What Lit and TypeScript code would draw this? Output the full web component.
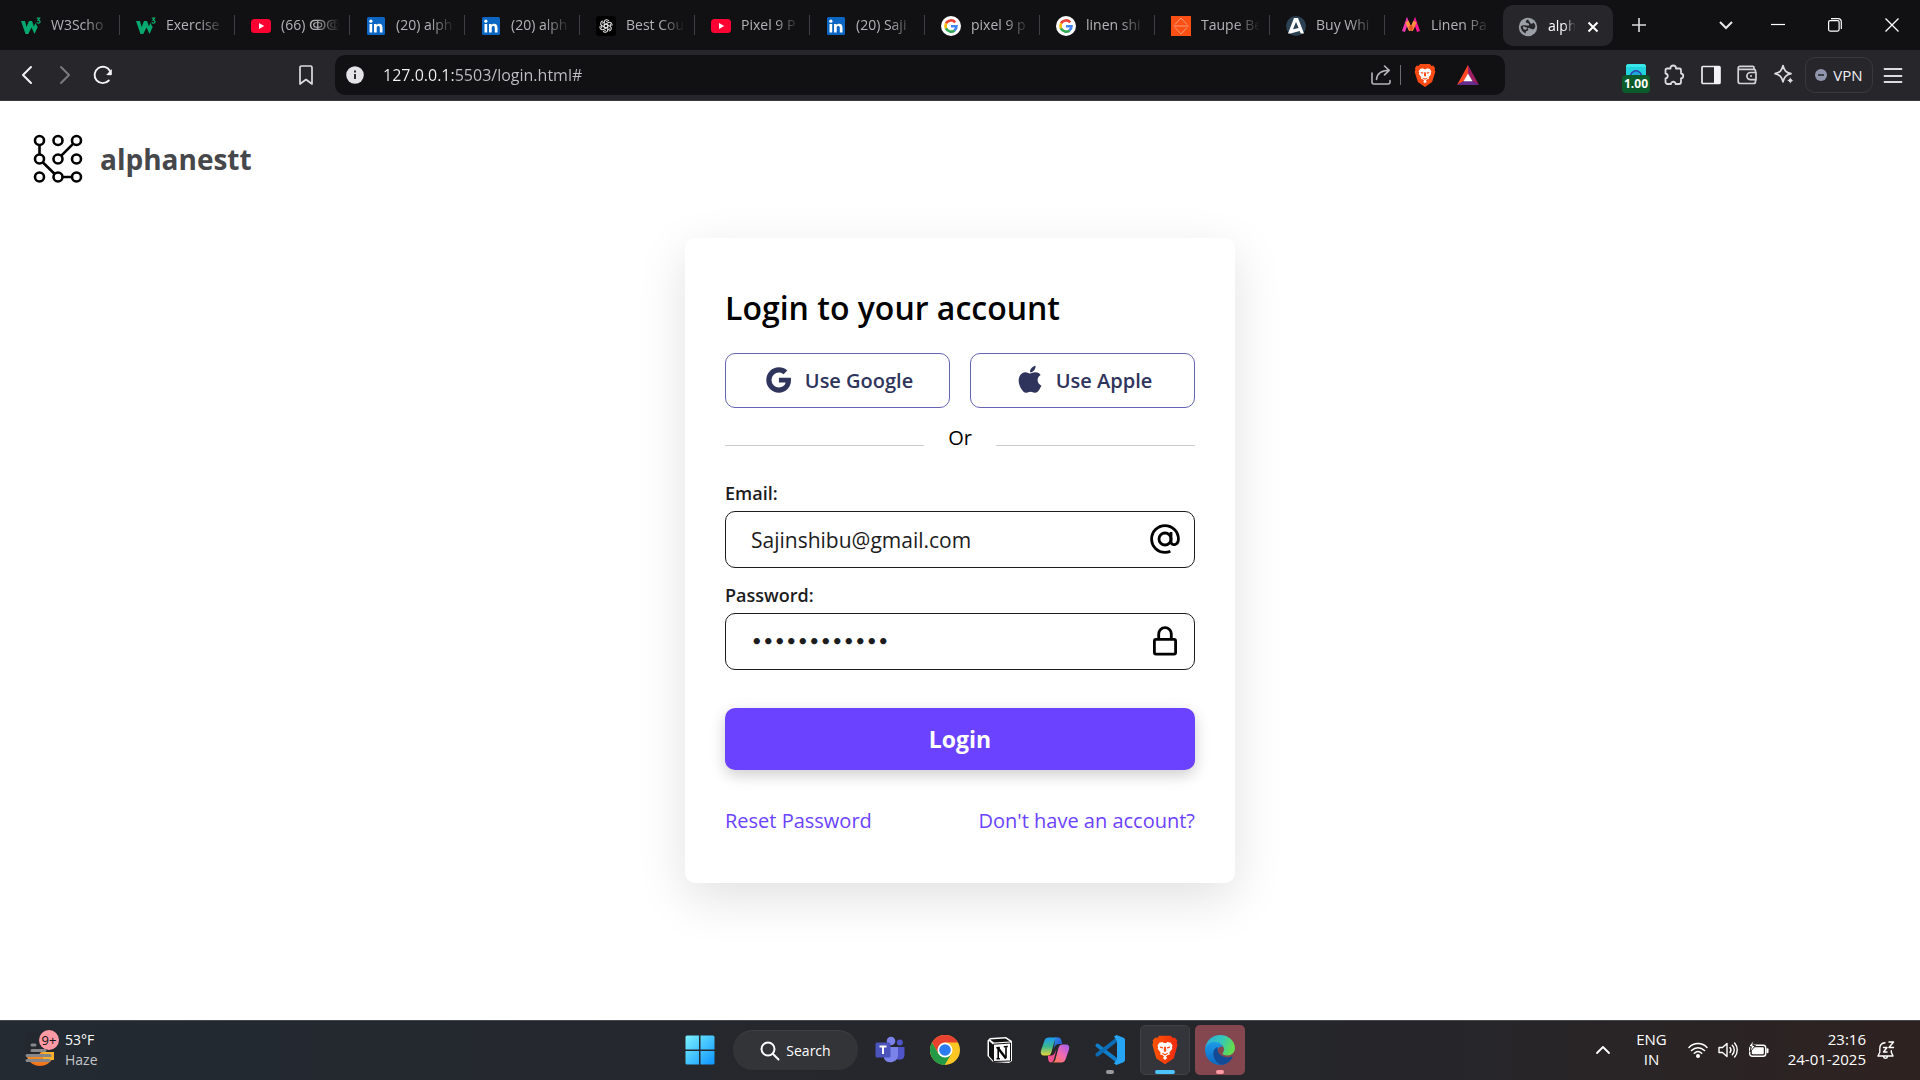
import { LitElement, html, svg, css } from "lit";
import { customElement, state } from "lit/decorators.js";

const pic = (w: number, h: number, box: string, body: unknown) =>
  html`<svg class="ic" width=${w} height=${h} viewBox=${box} fill="none" aria-hidden="true">${body}</svg>`;

const lion = svg`
  <path fill="#fff" d="M5.600 5.500 8 4.900l1.200.800h1.600L12 4.900l2.400.600 1.400 2-.500 1.500.300 1-2.300 3.200.500 1.200-1.800.500-1.300 1.300 1 .9L10 18.600l-1.700-1.500 1-.9L8 14.900l-1.800-.5.500-1.200L4.400 10l.3-1-.5-1.500z"/>
  <path fill="#fb4b14" d="M5.800 8.200l2.700.6-.2 1-1.800-.3zM14.200 8.200l-2.700.6.2 1 1.800-.3zM9.300 8.500h1.400l.3 3.200-1 .8-1-.8zM7.600 13.200l2.400.9 2.400-.9-.4.900-2 1.200-2-1.200z"/>`;

const icons = {
  w3: pic(20, 20, "0 0 20 20", svg`<path fill="#04aa6d" d="M0 5h4l1.600 6L8 5h3l2 5.500L14.300 7l2.400 4-3.200 7-3-6.500L7.200 18H4.500z"/><path stroke="#04aa6d" stroke-width="1.300" d="M15.800 2.200h2.700l-1.500 2c2.600-.2 2.600 3 .6 3-.9 0-1.500-.3-1.900-1"/>`),
  youtube: pic(20, 20, "0 0 20 20", svg`<rect y="3" width="20" height="14" rx="3.500" fill="#ff0033"/><path fill="#fff" d="M8 7v6l5.200-3z"/>`),
  linkedin: pic(20, 20, "0 0 20 20", svg`<rect x="1" y="1" width="18" height="18" rx="1.500" fill="#0a66c2"/><path fill="#fff" d="M3.500 8h2.700v8.500H3.500zM8 8h2.600v1.200c1.300-2.200 5.900-2.100 5.900 2.200v5.100h-2.700v-4.700c0-2.300-3.100-2.200-3.100 0v4.700H8z"/><circle cx="4.850" cy="5.200" r="1.600" fill="#fff"/>`),
  openai: pic(20, 20, "0 0 20 20", svg`<rect width="20" height="20" rx="3" fill="#000"/><g transform="translate(1.500 1.500) scale(.85)" stroke="#e0e0e0" stroke-width="1.200">${[0, 60, 120, 180, 240, 300].map(a => svg`<path transform="rotate(${a} 10 10)" d="M10 12.400 7.900 11.200V5.600c0-3.200 4.200-3.900 5.500-1.400M10.200 4.200l3.600 2.100"/>`)}</g>`),
  google: pic(20, 20, "0 0 20 20", svg`<circle cx="10" cy="10" r="10" fill="#fff"/><g stroke-width="2.600"><path stroke="#ea4335" d="M14.200 6.300A5.600 5.600 0 0 0 5 7.500"/><path stroke="#fbbc05" d="M5.100 7.400a5.600 5.600 0 0 0 0 5.200"/><path stroke="#34a853" d="M5 12.400a5.600 5.600 0 0 0 8.600 2"/><path stroke="#4285f4" d="M13.400 14.500a5.600 5.600 0 0 0 2.100-4.300H10"/></g>`),
  taupe: pic(20, 20, "0 0 20 20", svg`<path fill="#fb4f14" d="M0 0h20v20H0z"/><path stroke="#ff9d7c" d="M4 8.500 10 2l6 6.500M4 11.500l6 6.500 6-6.500M2.500 10h15"/>`),
  ajio: pic(20, 20, "0 0 20 20", svg`<circle cx="10" cy="10" r="10" fill="#2c4152"/><path fill="#fff" fill-rule="evenodd" d="M8 2h4l6 15.500h-3.200L13.600 15l-9 2.500H2zm2 4L7 13.300l5.600-1.200z"/>`),
  myntra: pic(20, 20, "0 0 20 20", svg`<path stroke="#f13ab1" stroke-width="3.200" d="M2.500 15.500 6 5.500l3 8"/><path stroke="#ff1493" stroke-width="3.200" d="m11 13.500 3-8 3.500 10"/><path stroke="#fd913c" stroke-width="3.600" d="m6 5.500 3.800 9M14 5.500l-4 9"/><path stroke="#f05524" stroke-width="2.600" d="m9 10 1 4 1-4"/>`),
  globe: pic(20, 20, "0 0 20 20", svg`<circle cx="10" cy="10" r="9.200" fill="#9aa0a6"/><path fill="#27272b" d="M10.500 2.500c-2.600.5-3.200 1.900-2.300 2.900.8.900 3 .5 3 2 0 1.700-2.800 1.100-4.200.9C5.600 8 3.700 8.500 2.600 9.500c.2 3.400 2 5.700 5 7 0-1.800.4-2.400 2-2.800 1.200-.3 1-1.700-.2-2.500 3.200-.6 4 1.800 6 1.100 1.100-.4 1.500-1.500 2-2.800-.2-1.400-.9-2.800-1.800-3.900-.6 1.100-1.900 1.500-2.900.9-.9-.6-.6-1.700-1.500-2.300-.6-.4-1-.8-.7-1.700z"/><path fill="#9aa0a6" d="m5 9.300 4.200 1.500-1.200 2-2.600-.6z"/>`),
  close: pic(12, 12, "0 0 12 12", svg`<path stroke="#fff" stroke-width="2" d="m1.500 1.500 9 9m0-9-9 9"/>`),
  plus: pic(14, 14, "0 0 14 14", svg`<path stroke="#dcdcde" stroke-width="1.600" d="M7 0v14M0 7h14"/>`),
  down: pic(14, 14, "0 0 14 14", svg`<path stroke="#e8e8ea" stroke-width="2" d="m1 4 6 6 6-6"/>`),
  min: pic(14, 14, "0 0 14 14", svg`<path stroke="#fff" stroke-width="1.200" d="M0 6.500h14"/>`),
  restore: pic(14, 14, "0 0 14 14", svg`<rect x=".600" y="2.600" width="10.500" height="10.500" rx="1.500" stroke="#fff" stroke-width="1.200"/><path stroke="#fff" stroke-width="1.200" d="M3 .6h7a3.300 3.300 0 0 1 3.300 3.300v7"/>`),
  quit: pic(14, 14, "0 0 14 14", svg`<path stroke="#fff" stroke-width="1.300" d="m.5.5 13 13m0-13-13 13"/>`),
  back: pic(20, 20, "0 0 20 20", svg`<path stroke="#f4f4f6" stroke-width="2" stroke-linecap="round" stroke-linejoin="round" d="m14 2-8 8 8 8"/>`),
  forward: pic(20, 20, "0 0 20 20", svg`<path stroke="#7c7c82" stroke-width="1.800" stroke-linecap="round" stroke-linejoin="round" d="m6 2 8 8-8 8"/>`),
  reload: pic(20, 20, "0 0 20 20", svg`<path stroke="#f4f4f6" stroke-width="1.900" stroke-linecap="round" d="M15.800 15.500A8.200 8.200 0 1 1 17 6"/><path fill="#f4f4f6" d="M18.800 4v5.500a1 1 0 0 1-1 .8l-4.600-.4z"/>`),
  bookmark: pic(20, 20, "0 0 20 20", svg`<path stroke="#dcdce0" stroke-width="1.700" stroke-linejoin="round" d="M4 2.500A1.500 1.500 0 0 1 5.500 1h9A1.500 1.500 0 0 1 16 2.500V19l-6-4.500L4 19z"/>`),
  info: pic(18, 18, "0 0 18 18", svg`<circle cx="9" cy="9" r="8.800" fill="#e3e3e8"/><path stroke="#1a1a1e" stroke-width="1.800" d="M9 8v5M9 4.600v1.800"/>`),
  share: pic(20, 20, "0 0 20 20", svg`<g stroke="#b4b4ba" stroke-width="1.600" stroke-linecap="round" stroke-linejoin="round"><path d="M1 8v9a2 2 0 0 0 2 2h14a2 2 0 0 0 2-2v-1.500"/><path d="M5.500 14.500C6 8 10 5.500 18 5.300M13.500 1l4.700 4.300-4.700 4.500"/></g>`),
  brave: pic(22, 24, "0 0 20 22", svg`<path fill="#fb4b14" d="M14.500 1 16 2.700l1.500-.3 1.800 2.300-.5 1.500.7 1.800-3 9.500L10 22l-6.500-4.500L.5 8l.7-1.800-.5-1.500 1.800-2.300 1.500.3L5.500 1z"/>${lion}`),
  bat: pic(22, 20, "0 0 22 20", svg`<path fill="#ff4724" d="M11 0 0 20l7-4 4-7z"/><path fill="#9e1f63" d="m11 0 11 20-7-4-4-7z"/><path fill="#662d91" d="M0 20h22l-7-4H7z"/><path fill="#fff" d="m11 8.500 4.500 7.700h-9z"/>`),
  puzzle: pic(22, 22, "0 0 22 22", svg`<path stroke="#dcdce0" stroke-width="1.800" stroke-linejoin="round" d="M2.500 6A1.500 1.500 0 0 1 4 4.500h3.500c-.500-4 6-4 5.500 0h3.500A1.500 1.500 0 0 1 18 6v3.500c3 .5 3 4.500 0 5V18a2 2 0 0 1-2 2h-3.500c.3-3-4.600-3-4.500 0H4.500a2 2 0 0 1-2-2v-3.500c3-.3 3-4.500 0-5z"/>`),
  panel: pic(20, 20, "0 0 20 20", svg`<rect x="1" y="1.500" width="18" height="17" rx="1" stroke="#ececf0" stroke-width="1.700"/><path fill="#f4f4f8" d="M13 1h6v18h-6z"/>`),
  wallet: pic(20, 20, "0 0 20 20", svg`<g stroke="#d4d4d8" stroke-width="1.700" stroke-linejoin="round"><path d="M18.500 7V5.800a1.500 1.500 0 0 0-1.500-1.500H1.500M17 4V2.500A1.200 1.200 0 0 0 15.800 1.300H3a1.700 1.700 0 0 0-1.800 1.700v13.500A2 2 0 0 0 3 18.500h13.500a2 2 0 0 0 2-2V15"/><path d="M19 7.500h-5.500a3.600 3.600 0 0 0 0 7.200H19z"/></g><circle cx="14" cy="11" r="1" fill="#d4d4d8"/>`),
  leo: pic(22, 22, "0 0 22 22", svg`<path stroke="#dcdce0" stroke-width="1.700" stroke-linejoin="round" d="M10 1.500c1.200 5.200 3 7 8 8.200-5 1.200-6.800 3-8 8.200-1.200-5.200-3-7-8-8.200 5-1.200 6.800-3 8-8.200z"/><path fill="#dcdce0" stroke="#27272b" d="M17.300 12c.5 2.800 1.600 3.900 4.400 4.400-2.800.6-3.900 1.700-4.400 4.500-.6-2.800-1.700-3.900-4.500-4.500 2.800-.5 3.900-1.600 4.500-4.400z"/>`),
  ext: pic(22, 22, "0 0 22 22", svg`<rect x="1" y="0" width="20" height="18" rx="3" fill="#22d3dd"/><path fill="#38e8e8" d="M4 0h14a3 3 0 0 1 3 3H1a3 3 0 0 1 3-3z"/><path stroke="#2b3fae" stroke-width="1.600" d="M5.500 11c3-5.500 8-5.500 11 0"/><circle cx="11" cy="10.500" r="3" fill="#1fa5d8"/>`),
  vpn: pic(12, 12, "0 0 12 12", svg`<circle cx="6" cy="6" r="6" fill="#9296ad"/><path stroke="#2a2b33" stroke-width="1.600" d="M3 6h6"/>`),
  menu: pic(20, 20, "0 0 20 20", svg`<path stroke="#dcdce0" stroke-width="1.800" stroke-linecap="round" d="M1.500 4h17M1.500 11h17M1.500 17h17"/>`),
  logo: pic(50, 50, "0 0 50 50", svg`<g stroke="#000" stroke-width="2.600">${[6.5, 25, 43].map(y => [6.5, 25, 43.5].map(x => svg`<circle cx=${x} cy=${y} r="4.500"/>`))}<path d="M6.500 11v9.500M40.300 9.700 28.300 21.700M9.700 28.300l12 11.700M29.500 43h9.500"/></g>`),
  gmark: pic(34, 34, "0 0 24 24", svg`<path fill="currentColor" d="M20.283 10.356h-8.327v3.451h4.792c-.446 2.193-2.313 3.453-4.792 3.453a5.270 5.270 0 0 1-5.279-5.280 5.270 5.270 0 0 1 5.279-5.279c1.259 0 2.397.447 3.290 1.178l2.600-2.599c-1.584-1.381-3.615-2.233-5.890-2.233a8.908 8.908 0 0 0-8.934 8.934 8.907 8.907 0 0 0 8.934 8.934c4.467 0 8.529-3.249 8.529-8.934 0-.528-.081-1.097-.202-1.625z"/>`),
  amark: pic(34, 34, "0 0 24 24", svg`<path fill="currentColor" d="M19.665 16.811a10.316 10.316 0 0 1-1.021 1.837c-.537.767-.978 1.297-1.316 1.592-.525.482-1.089.730-1.692.744-.432 0-.954-.123-1.562-.373-.610-.249-1.170-.371-1.683-.371-.537 0-1.113.122-1.730.371-.616.250-1.114.381-1.495.393-.577.025-1.154-.229-1.729-.764-.367-.320-.826-.870-1.377-1.648-.590-.829-1.075-1.794-1.455-2.891-.407-1.187-.611-2.335-.611-3.447 0-1.273.275-2.372.826-3.292a4.857 4.857 0 0 1 1.730-1.751 4.650 4.650 0 0 1 2.340-.662c.460 0 1.063.142 1.810.422s1.227.422 1.436.422c.158 0 .689-.167 1.593-.498.853-.307 1.573-.434 2.163-.384 1.600.129 2.801.759 3.600 1.895-1.430.867-2.137 2.080-2.123 3.637.012 1.213.453 2.222 1.317 3.023a4.330 4.330 0 0 0 1.315.863c-.106.307-.218.600-.336.882zM15.998 2.380c0 .950-.348 1.838-1.039 2.659-.836.976-1.846 1.541-2.941 1.452a2.955 2.955 0 0 1-.021-.360c0-.913.396-1.889 1.103-2.688.352-.404.800-.741 1.343-1.009.542-.264 1.054-.410 1.536-.435.013.128.019.255.019.381z"/>`),
  at: pic(32, 32, "0 0 32 32", svg`<g stroke="#000" stroke-width="2.800"><circle cx="16" cy="16" r="6"/><path d="M22 9v9.500c0 5 7.400 4 7.400-2.500A13.400 13.400 0 1 0 16 29.400c2 0 3.800-.4 5.400-1.100"/></g>`),
  lock: pic(32, 32, "0 0 32 32", svg`<g stroke="#000" stroke-width="2.800"><rect x="5.400" y="14.400" width="21.200" height="14.700" rx="1.500"/><path d="M9.700 14V9a6.300 6.300 0 0 1 12.600 0v5"/></g>`),
  weather: pic(34, 36, "0 0 34 36", svg`<defs><linearGradient id="sun" x2="0" y2="1"><stop stop-color="#ffc12e"/><stop offset="1" stop-color="#f0701c"/></linearGradient></defs><circle cx="15" cy="20" r="14" fill="url(#sun)"/><path fill="#23282f" d="M0 0h34v20H16l-4 5H0z"/><path fill="#fbb02c" d="M18 20h11v8H18z"/><path stroke="#85878b" stroke-width="3" stroke-linecap="round" d="M7 13h3M7 18.500h13M2 23.500h18M21 23.500h4M2 28.500h22"/>`),
  windows: pic(30, 30, "0 0 30 30", svg`<defs><linearGradient id="win" x1="0" y1="0" x2="30" y2="30" gradientUnits="userSpaceOnUse"><stop stop-color="#7df3ff"/><stop offset="1" stop-color="#0a93ff"/></linearGradient></defs><path fill="url(#win)" d="M2 .5h12v14H.5V2A1.500 1.500 0 0 1 2 .500zM15.500.500H28A1.500 1.500 0 0 1 29.500 2v12.500h-14zM.5 16h13.500v13.500H2A1.500 1.500 0 0 1 .5 28zM15.500 16h14v12a1.500 1.500 0 0 1-1.500 1.500H15.500z"/>`),
  search: pic(20, 20, "0 0 20 20", svg`<circle cx="8" cy="8" r="6.500" stroke="#fff" stroke-width="2"/><path stroke="#fff" stroke-width="2" stroke-linecap="round" d="m12.800 12.800 5.700 5.700"/>`),
  teams: pic(30, 30, "0 0 30 30", svg`<circle cx="24.800" cy="7.500" r="3" fill="#4f54c8"/><path fill="#4f54c8" d="M20 12h9.500v7.500c0 5-4 6-8 4.500z"/><circle cx="16" cy="6" r="4.300" fill="#7b83eb"/><path fill="#7b83eb" d="M9 12h14v8a7.500 7.500 0 0 1-14 3.500z"/><rect x=".5" y="7.500" width="15" height="15" rx="1.500" fill="#4b53bc"/><path stroke="#fff" stroke-width="2" d="M4.500 11.500h7M8 11.500V19"/>`),
  chrome: pic(30, 30, "0 0 30 30", svg`<circle cx="15" cy="15" r="15" fill="#fcc624"/><path fill="#e8412f" d="M2 7.500a15 15 0 0 1 26 0H15L8.500 18.700z"/><path fill="#249a47" d="M2 7.500a15 15 0 0 0 12.700 22.500L21.400 18.700H8.500z"/><circle cx="15" cy="15" r="7.500" fill="#fff"/><circle cx="15" cy="15" r="5.800" fill="#2a7cf0"/>`),
  notion: pic(26, 26, "0 0 26 26", svg`<path fill="#fff" d="M3 1 19 0l6 4v20l-3 2-16-1-5.500-6V3.500z"/><path fill="#111" d="m3 2.500 15.500-1 4.500 3L7 5.500zM2 4l4 3.500v16l-4-4.500z"/><path fill="#fff" stroke="#111" d="M6.500 7.200 23.500 6v18l-17 .5z"/><path stroke="#000" stroke-width="2.300" d="m11 11 8 10.500"/><path stroke="#000" stroke-width="1.600" d="M11.200 10.500v11M19 9.500v11M9.300 10.800l3.500-.2M16.800 9.800l4-.3M9.500 21.800h3.400"/>`),
  copilot: pic(30, 30, "0 0 30 30", svg`<defs><linearGradient id="cpa" x1="0" y1="0" x2="0" y2="1"><stop stop-color="#1d9bf0"/><stop offset=".5" stop-color="#3bb78f"/><stop offset="1" stop-color="#e8d53a"/></linearGradient><linearGradient id="cpb" x1="1" y1="0" x2="0" y2="1"><stop stop-color="#a15cf2"/><stop offset=".5" stop-color="#f06bb0"/><stop offset="1" stop-color="#ff7b3d"/></linearGradient><linearGradient id="cpc" x2="1" y2="1"><stop stop-color="#2c8de8"/><stop offset="1" stop-color="#2548c8"/></linearGradient></defs><path fill="url(#cpa)" d="M8.500 2.500H18c-2 0-3 1.500-3.500 3.500l-3 11c-.7 2.500-2 3.500-4 3.500H4C1 20.500.3 18 1 15.500L4.500 5.500c.7-2 2-3 4-3z"/><path fill="url(#cpc)" d="M15 2.500h3.500c2 0 2.500 1.500 3 3.500l.7 3H19c-3 0-4 2-5 4.500z"/><path fill="url(#cpb)" d="M21.500 27.500H12c2 0 3-1.500 3.500-3.500l3-11c.7-2.500 2-3.500 4-3.500H26c3 0 3.700 2.500 3 5L25.500 24.500c-.7 2-2 3-4 3z"/><path fill="#f0508c" d="M8 20.500h3.500c1.500 0 2.500-1 3.500-3l1.500-3.500-2.500 10c-.6 2.300-1.500 3.500-3 3.500-2 0-2.500-1.500-3-4z"/>`),
  vscode: pic(30, 30, "0 0 30 30", svg`<path stroke="#0f7fcd" stroke-width="4" stroke-linejoin="round" stroke-linecap="round" d="m2.500 10.500 19.500 15"/><path stroke="#0b6bb5" stroke-width="4" stroke-linejoin="round" stroke-linecap="round" d="M2.500 19.500 22 4.500"/><path fill="#27a3f3" d="M21.500 0l7 2.800A2.500 2.500 0 0 1 30 5v20a2.500 2.500 0 0 1-1.500 2.200l-7 2.800-2.500-1.500L22 24V6l-3-4.500z"/>`),
  braveBig: pic(26, 30, "0 0 20 22", svg`<defs><linearGradient id="brv" x2="1"><stop stop-color="#ff5500"/><stop offset="1" stop-color="#f02a10"/></linearGradient></defs><path fill="url(#brv)" d="M14.500 0 16 1.700l1.500-.3 2 2.300-.5 1.500.7 1.800-3 10.500L10 22l-6.700-4.500L.3 7 1 5.200.5 3.700l2-2.300 1.500.3L5.500 0z"/>${lion}`),
  edge: pic(30, 30, "0 0 30 30", svg`<defs><linearGradient id="eda" x2="1" y2=".3"><stop stop-color="#2aa8e0"/><stop offset=".6" stop-color="#36c7b8"/><stop offset="1" stop-color="#62dc50"/></linearGradient><linearGradient id="edb" x2="0" y2="1"><stop stop-color="#1e9be8"/><stop offset="1" stop-color="#0c66c0"/></linearGradient></defs><path fill="url(#edb)" d="M0 14C1 9 5 6.500 9.500 6.500c5 0 8 3 8 5.500-2-1-5 0-5 4s4 7.500 9.500 7.500c2.500 0 4-.500 5.500-1.500C25 27 20.500 30 15 30 6.500 30-.5 23 0 14z"/><path fill="#124a96" d="M12.500 12c-4 2-5 6-3.500 10.500S15 30 18 29.700c4-.9 7.500-3.600 9.500-7.200.3-.7-.2-1.300-1-.9-2 1-4.500 1.200-7 .4-5-1.500-7.500-5-7-10z"/><path fill="url(#eda)" d="M0 14C1 5.500 7.500 0 15 0c9 0 15 6.500 15 13 0 4.500-3.500 7.500-7.500 7.500-3 0-5-1-5-2 0-.8 1.500-1.500 1.500-4 0-4-4.500-7.500-9.500-7.500C5 7 1 10 0 14z"/>`),
  up: pic(16, 16, "0 0 16 16", svg`<path stroke="#fff" stroke-width="1.800" stroke-linecap="round" stroke-linejoin="round" d="m2 11 6-6 6 6"/>`),
  wifi: pic(20, 18, "0 0 20 18", svg`<g stroke="#fff" stroke-width="1.500" stroke-linecap="round"><path d="M1 6.500c5-5.200 13-5.200 18 0M3.500 9.500c3.800-3.800 9.200-3.800 13 0M6.300 12.300c2.200-2.200 5.200-2.200 7.400 0"/></g><circle cx="10" cy="15" r="2" fill="#fff"/>`),
  volume: pic(20, 18, "0 0 20 18", svg`<g stroke="#fff" stroke-width="1.400" stroke-linecap="round" stroke-linejoin="round"><path d="M1 6.500h3.500L9 2.500v13l-4.500-4H1zM12 6.500c1.200 1.500 1.200 3.500 0 5M14.300 4.300c2.600 2.700 2.600 6.700 0 9.400M16.600 2c3.500 4 3.500 10 0 14"/></g>`),
  battery: pic(22, 18, "0 0 22 18", svg`<rect x="1.700" y="4.200" width="16" height="11" rx="2.500" stroke="#fff" stroke-width="1.400"/><rect x="3.800" y="6.200" width="12" height="7" rx="1" fill="#fff"/><path stroke="#fff" stroke-width="2" stroke-linecap="round" d="M19.500 8.200v3"/><path fill="#fff" stroke="#2a2526" d="M5.500 -.5 .500 5.700h2.800L2 11 7.500 4.500H4.800z"/>`),
  bell: pic(20, 20, "0 0 20 20", svg`<g stroke="#fff" stroke-width="1.400" stroke-linecap="round" stroke-linejoin="round"><path d="M9 2.700C5.500 3 3.800 5.500 3.800 8.500v3.700L2 16h15l-1.700-3.800v-1.500M7.500 16.500c.5 2.500 3.500 2.500 4 0M7.500 7.500H11L7.500 12H11M13 2h4.500L13 7.500h4.500"/></g>`),
};

type IconName = keyof typeof icons;

@customElement("app-root")
export class AppRoot extends LitElement {
  static styles = css`
    :host {
      --ui: "Open Sans", "Noto Sans", "Liberation Sans", sans-serif;
      --brand: #6b42ff;
      display: flex;
      flex-direction: column;
      min-height: 100vh;
      background: #fff;
      color: #000;
      font-family: var(--ui);
    }
    *, *::before, *::after { box-sizing: border-box; }
    button { border: 0; padding: 0; margin: 0; background: none; color: inherit; font: inherit; cursor: pointer; }
    a { text-decoration: none; }
    .ic { display: block; flex: none; }
    .icon-btn { display: flex; align-items: center; justify-content: center; }

    .tabs { display: flex; height: 50px; background: #111113; color: #b4b4b8; padding-left: 5px; font-size: 14px; align-items: stretch; }
    .tab { display: flex; align-items: center; width: 115px; gap: 10px; padding: 2px 7px 0 16px; position: relative; text-align: left; }
    .tab:not(.last)::after { content: ""; position: absolute; right: 0; top: 15px; height: 20px; width: 1px; background: #3f3f43; }
    .tab .name { flex: 1; min-width: 0; overflow: hidden; white-space: nowrap; line-height: 20px; padding-bottom: 2px; mask-image: linear-gradient(90deg, #000 55%, transparent 95%); }
    .tab.active { width: 110px; margin: 5px 0 4px 3px; padding: 2px 14px 0 15px; border-radius: 10px; background: #27272b; color: #fff; }
    .tab.active .name { flex: none; width: 29px; }
    .tabs .plus { width: 52px; }
    .window { margin-left: auto; display: flex; }
    .window button { width: 57px; }
    .window .drop { width: 46px; }

    .toolbar { display: flex; height: 51px; align-items: center; background: #27272b; border-bottom: 1px solid #38383c; }
    .nav { display: flex; align-items: center; width: 335px; padding: 0 19px 0 17px; gap: 18px; }
    .nav .mark { margin-left: auto; }
    .address { display: flex; align-items: center; flex: 1; height: 40px; border-radius: 10px; background: #111113; padding: 0 26px 0 11px; gap: 19px; }
    .url { flex: 1; min-width: 0; border: 0; outline: 0; padding: 0; font: 16px/24px var(--ui); color: transparent; background: linear-gradient(90deg, #f4f4f6 72px, #c0c0c6 72px); -webkit-background-clip: text; background-clip: text; }
    .actions { display: flex; align-items: center; }
    .split { width: 1px; height: 20px; background: #6c6c72; margin: 0 13px 0 9px; }
    .actions .rewards { margin-left: 21px; }
    .tools { display: flex; align-items: center; width: 415px; justify-content: flex-end; padding-right: 17px; gap: 16px; color: #f0f0f4; }
    .ext { position: relative; }
    .badge { position: absolute; left: -3px; top: 11px; width: 28px; height: 18px; border-radius: 4px; background: #0b5c2a; color: #fff; font-size: 12px; line-height: 18px; font-weight: 700; text-align: center; }
    .vpn { display: flex; align-items: center; gap: 6px; height: 36px; width: 68px; justify-content: center; border: 1px solid #38383e; border-radius: 10px; font-size: 15px; margin: 0 -6px; }

    main { flex: 1; display: flex; flex-direction: column; }
    .brand { display: flex; align-items: center; gap: 17px; padding: 33px; color: #46474a; font-size: 28px; line-height: 50px; font-weight: 700; }
    .card { width: 550px; max-width: 100%; margin: 21px auto 48px; padding: 50px 40px 47px; border-radius: 10px; background: #fff; box-shadow: 0 15px 50px rgba(0, 0, 0, 0.12); }
    h1 { margin: 0 0 25px; font-size: 32px; line-height: 40px; font-weight: 600; }
    .social { display: grid; grid-template-columns: 1fr 1fr; gap: 20px; }
    .social button { display: flex; align-items: center; justify-content: center; gap: 9px; height: 55px; border: 1px solid #6464b4; border-radius: 10px; color: #2f345c; font-size: 20px; font-weight: 600; }
    .social .ic, .field .ic { margin-bottom: 2px; }
    .or { display: grid; grid-template-columns: 1fr 72px 1fr; align-items: end; text-align: center; font-size: 20px; line-height: 28px; margin: 16px 0 29px; }
    .or::before, .or::after { content: ""; height: 1px; background: #ccc; margin-bottom: 6px; }
    label { display: block; font-size: 18px; line-height: 24px; font-weight: 600; color: #1c1c1e; margin-bottom: 6px; }
    .field { display: flex; align-items: center; height: 57px; border: 1px solid #1c1c1e; border-radius: 10px; padding: 0 13px 0 25px; margin-bottom: 15px; }
    .field input { flex: 1; min-width: 0; border: 0; outline: 0; padding: 0; background: none; font: 21px/28px var(--ui); color: #1c1c1e; }
    .field input[type="password"] { font: 700 18px/28px "DejaVu Sans", sans-serif; }
    .submit { display: block; width: 100%; height: 62px; margin: 38px 0 36px; border-radius: 10px; background: var(--brand); color: #fff; font-size: 23px; font-weight: 700; box-shadow: 0 5px 15px rgba(0, 0, 0, 0.2); }
    .links { display: flex; justify-content: space-between; font-size: 20px; line-height: 30px; }
    .links a { color: var(--brand); }

    .taskbar { display: grid; grid-template-columns: 1fr auto 1fr; align-items: center; height: 60px; box-shadow: inset 0 1px #45494e; background: linear-gradient(90deg, #232a32, #25272c 45%, #26262a 75%, #2e2220); color: #fff; font-size: 14px; line-height: 20px; }
    .weather { display: flex; align-items: center; gap: 6px; padding-left: 25px; text-align: left; position: relative; }
    .weather .count { position: absolute; left: 39px; top: 0; width: 20px; height: 20px; border-radius: 50%; background: #ff99a4; color: #111; font-size: 13px; line-height: 20px; text-align: center; }
    .weather .sky { color: #c4c6c8; }
    .dock { display: flex; align-items: center; gap: 5px; }
    .app { display: flex; align-items: center; justify-content: center; width: 50px; height: 50px; border-radius: 5px; position: relative; }
    .app::after { content: ""; position: absolute; bottom: 1px; left: 50%; transform: translateX(-50%); height: 4px; border-radius: 2px; }
    .open::after { width: 8px; background: #9a9a9e; }
    .front { background: #33353a; border: 1px solid #3f4145; }
    .front::after { width: 20px; background: #4cc2ff; bottom: 0; }
    .alert { background: #84474f; }
    .alert::after { width: 8px; background: #ff99a4; }
    .find { display: flex; align-items: center; justify-content: center; gap: 6px; width: 125px; height: 40px; margin: 0 2px 0 3px; border-radius: 20px; background: #333438; border-top: 1px solid #3f4044; }
    .tray { display: flex; align-items: center; justify-content: flex-end; padding-right: 24px; font-size: 15px; }
    .lang { text-align: center; margin: 0 21px 0 25px; }
    .lang, .clock { padding-bottom: 2px; }
    .status { display: flex; gap: 10px; }
    .clock { text-align: right; margin: 0 10px 0 18px; }
  `;

  @state() private email = "Sajinshibu@gmail.com";
  @state() private password = "abcdefghijkl";

  private tabs: [IconName, string][] = [
    ["w3", "W3Scho"], ["w3", "Exercise"], ["youtube", "(66) ↂↂ"], ["linkedin", "(20) alph"],
    ["linkedin", "(20) alph"], ["openai", "Best Cou"], ["youtube", "Pixel 9 P"], ["linkedin", "(20) Saji"],
    ["google", "pixel 9 p"], ["google", "linen shi"], ["taupe", "Taupe Be"], ["ajio", "Buy Whi"], ["myntra", "Linen Pa"],
  ];

  private icon(name: IconName, label: string, cls = "") {
    return html`<button class="icon-btn ${cls}" aria-label=${label}>${icons[name]}</button>`;
  }

  render() {
    return html`
      <nav class="tabs" aria-label="Tabs">
        ${this.tabs.map(([i, t], n) => html`<button class="tab ${n === this.tabs.length - 1 ? "last" : ""}">${icons[i]}<span class="name">${t}</span></button>`)}
        <button class="tab last active">${icons.globe}<span class="name">alph</span>${icons.close}</button>
        ${this.icon("plus", "New tab", "plus")}
        <div class="window">
          ${this.icon("down", "Search tabs", "drop")}${this.icon("min", "Minimize")}${this.icon("restore", "Restore")}${this.icon("quit", "Close")}
        </div>
      </nav>
      <div class="toolbar">
        <div class="nav">
          ${this.icon("back", "Back")}${this.icon("forward", "Forward")}${this.icon("reload", "Reload")}${this.icon("bookmark", "Bookmark", "mark")}
        </div>
        <div class="address">
          ${this.icon("info", "Site information")}
          <input class="url" type="text" aria-label="Address" .value=${"127.0.0.1:5503/login.html#"} />
          <div class="actions">
            ${this.icon("share", "Share")}<span class="split"></span>${this.icon("brave", "Shields")}${this.icon("bat", "Rewards", "rewards")}
          </div>
        </div>
        <div class="tools">
          <button class="ext" aria-label="Playback speed">${icons.ext}<span class="badge">1.00</span></button>
          ${this.icon("puzzle", "Extensions")}${this.icon("panel", "Sidebar")}${this.icon("wallet", "Wallet")}${this.icon("leo", "Assistant")}
          <button class="vpn">${icons.vpn}VPN</button>
          ${this.icon("menu", "Menu")}
        </div>
      </div>

      <main>
        <header class="brand">${icons.logo}<span>alphanestt</span></header>
        <form class="card" @submit=${(e: Event) => e.preventDefault()}>
          <h1>Login to your account</h1>
          <div class="social">
            <button type="button">${icons.gmark}Use Google</button>
            <button type="button">${icons.amark}Use Apple</button>
          </div>
          <div class="or">Or</div>
          <label for="email">Email:</label>
          <div class="field">
            <input id="email" type="text" .value=${this.email} @input=${(e: Event) => (this.email = (e.target as HTMLInputElement).value)} />${icons.at}
          </div>
          <label for="password">Password:</label>
          <div class="field">
            <input id="password" type="password" .value=${this.password} @input=${(e: Event) => (this.password = (e.target as HTMLInputElement).value)} />${icons.lock}
          </div>
          <button class="submit" type="submit">Login</button>
          <div class="links"><a href="#">Reset Password</a><a href="#">Don't have an account?</a></div>
        </form>
      </main>

      <footer class="taskbar">
        <button class="weather">${icons.weather}<span class="count">9+</span><span>53°F<br /><span class="sky">Haze</span></span></button>
        <div class="dock">
          ${this.icon("windows", "Start", "app")}
          <button class="find">${icons.search}Search</button>
          ${this.icon("teams", "Teams", "app")}${this.icon("chrome", "Chrome", "app")}${this.icon("notion", "Notion", "app")}
          ${this.icon("copilot", "Copilot", "app")}${this.icon("vscode", "Code editor", "app open")}
          ${this.icon("braveBig", "Brave", "app front")}${this.icon("edge", "Edge", "app alert")}
        </div>
        <div class="tray">
          ${this.icon("up", "Hidden icons")}
          <button class="lang">ENG<br />IN</button>
          <button class="status" aria-label="Network, sound and battery">${icons.wifi}${icons.volume}${icons.battery}</button>
          <button class="clock">23:16<br />24-01-2025</button>
          ${this.icon("bell", "Notifications")}
        </div>
      </footer>
    `;
  }
}
